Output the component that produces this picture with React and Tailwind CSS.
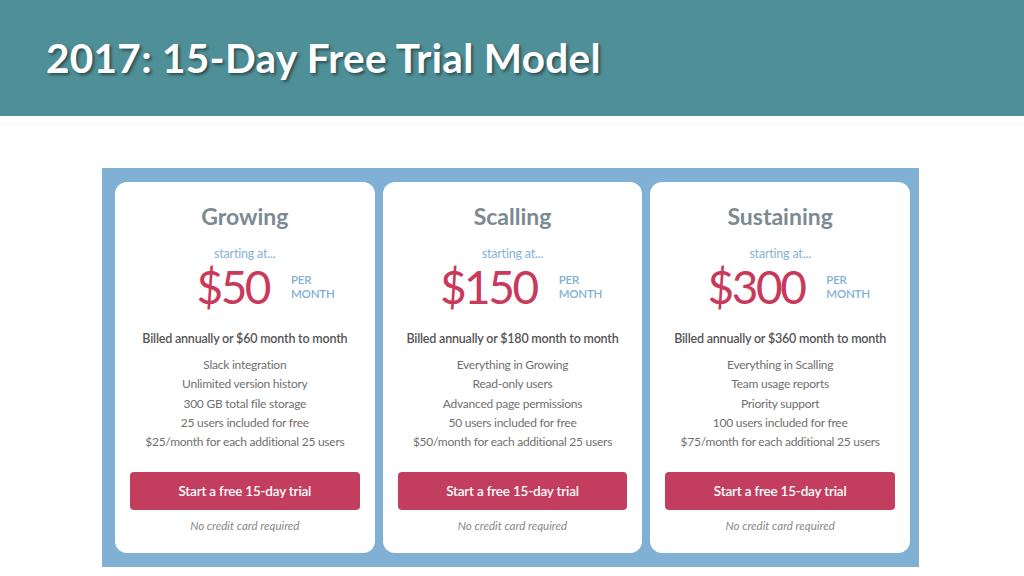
import React from "react";

const plans = [
  {
    name: "Growing",
    price: "$50",
    billed: "Billed annually or $60 month to month",
    features: [
      "Slack integration",
      "Unlimited version history",
      "300 GB total file storage",
      "25 users included for free",
      "$25/month for each additional 25 users",
    ],
  },
  {
    name: "Scalling",
    price: "$150",
    billed: "Billed annually or $180 month to month",
    features: [
      "Everything in Growing",
      "Read-only users",
      "Advanced page permissions",
      "50 users included for free",
      "$50/month for each additional 25 users",
    ],
  },
  {
    name: "Sustaining",
    price: "$300",
    billed: "Billed annually or $360 month to month",
    features: [
      "Everything in Scalling",
      "Team usage reports",
      "Priority support",
      "100 users included for free",
      "$75/month for each additional 25 users",
    ],
  },
];

function Card({ plan }) {
  return (
    <div className="bg-white rounded-[12px] flex flex-col items-center pt-[21px] pb-[18px] h-[371px]">
      <div className="text-[23px] leading-[26px] font-bold text-[#7c8a92]">{plan.name}</div>
      <div className="mt-[17px] text-[12.5px] leading-[15px] tracking-[-0.2px] text-[#86b3d5]">starting at...</div>
      <div className="w-full flex items-center mt-[1px]">
        <div className="w-[154px] shrink-0 text-right text-[46px] leading-[50px] tracking-[-2.5px] text-[#c8395b]">
          {plan.price}
        </div>
        <div className="pl-[22px] text-[11.5px] leading-[14px] tracking-[-0.2px] font-semibold text-[#80b1d4]">
          <div>PER</div>
          <div>MONTH</div>
        </div>
      </div>
      <div className="mt-[19px] text-[12.5px] leading-[16px] tracking-[-0.2px] font-semibold text-[#555]">{plan.billed}</div>
      <div className="mt-[8px] flex flex-col items-center text-[12px] leading-[19.3px] tracking-[-0.25px] text-[#707070]">
        {plan.features.map((f) => (
          <div key={f}>{f}</div>
        ))}
      </div>
      <div className="w-full px-[15px] mt-[21px]">
        <div className="h-[38px] rounded-[4px] bg-[#c33d5e] flex items-center justify-center text-white text-[13.5px] tracking-[-0.2px] font-semibold">
          Start a free 15-day trial
        </div>
      </div>
      <div className="mt-[9px] text-[11.5px] leading-[14px] italic text-[#888]">No credit card required</div>
    </div>
  );
}

export default function App() {
  return (
    <div className="w-[1024px] h-[576px] bg-white overflow-hidden" style={{ fontFamily: "Lato, 'Open Sans', sans-serif" }}>
      <div className="h-[116px] bg-[#4f8f97] flex items-center pl-[46px]">
        <h1
          className="text-white text-[40.5px] font-bold tracking-[0.3px]"
          style={{ textShadow: "2px 2px 3px rgba(0,0,0,0.45)" }}
        >
          2017: 15-Day Free Trial Model
        </h1>
      </div>
      <div className="mt-[52px] ml-[102px] w-[817px] bg-[#80b0d3] pt-[14px] pb-[14px] pl-[13px] pr-[9px] grid grid-cols-3 gap-[8px]">
        {plans.map((p) => (
          <Card key={p.name} plan={p} />
        ))}
      </div>
    </div>
  );
}
